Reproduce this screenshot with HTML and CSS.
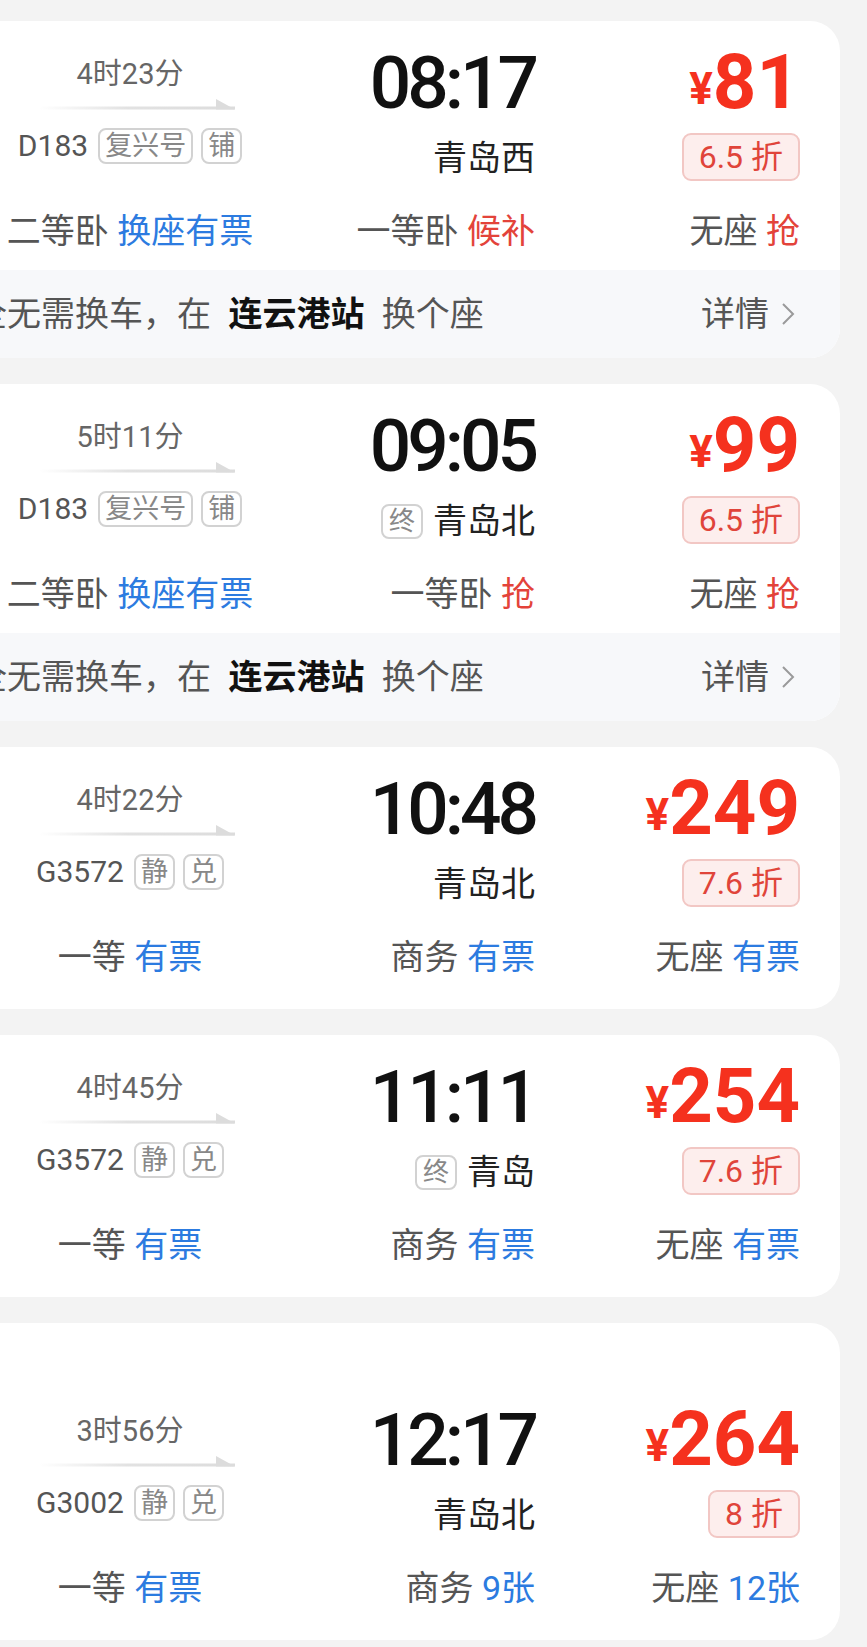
FILE: index.html
```html
<!DOCTYPE html>
<html lang="zh-CN">
<head>
<meta charset="utf-8">
<title>车次列表</title>
<link rel="stylesheet" href="styles.css">
</head>
<body>
<svg width="0" height="0" class="defs">
  <defs>
    <linearGradient id="arrowGrad" x1="0" y1="0" x2="1" y2="0">
      <stop offset="0" stop-color="#e2e2e2" stop-opacity="0"/>
      <stop offset="0.45" stop-color="#e2e2e2" stop-opacity="1"/>
      <stop offset="1" stop-color="#dcdcdc" stop-opacity="1"/>
    </linearGradient>
  </defs>
</svg>
<div class="list">

  <div class="card card--footer">
    <div class="main">
      <div class="col-info">
        <div class="duration">4时23分</div>
        <svg class="arrow" viewBox="0 0 196 12"><rect x="0" y="8.5" width="196" height="3" fill="url(#arrowGrad)"/><polygon points="177,1 196,11.5 177,11.5" fill="#dcdcdc"/></svg>
        <div class="train"><span class="train-no">D183</span><span class="tag">复兴号</span><span class="tag">铺</span></div>
      </div>
      <div class="col-arr">
        <div class="time">08:17</div>
        <div class="station">青岛西</div>
      </div>
      <div class="col-price">
        <div class="price"><span class="yen">¥</span>81</div>
        <div class="discount">6.5 折</div>
      </div>
    </div>
    <div class="seats">
      <div class="seat">二等卧 <span class="blue">换座有票</span></div>
      <div class="seat">一等卧 <span class="red">候补</span></div>
      <div class="seat">无座 <span class="red">抢</span></div>
    </div>
    <div class="footer">
      <div class="note">全无需换车，在 <b>连云港站</b> 换个座</div>
      <div class="detail">详情<svg class="chev" viewBox="0 0 14 24"><polyline points="2,2 12,12 2,22" fill="none" stroke="#9a9a9a" stroke-width="2"/></svg></div>
    </div>
  </div>

  <div class="card card--footer">
    <div class="main">
      <div class="col-info">
        <div class="duration">5时11分</div>
        <svg class="arrow" viewBox="0 0 196 12"><rect x="0" y="8.5" width="196" height="3" fill="url(#arrowGrad)"/><polygon points="177,1 196,11.5 177,11.5" fill="#dcdcdc"/></svg>
        <div class="train"><span class="train-no">D183</span><span class="tag">复兴号</span><span class="tag">铺</span></div>
      </div>
      <div class="col-arr">
        <div class="time">09:05</div>
        <div class="station"><span class="end-tag">终</span>青岛北</div>
      </div>
      <div class="col-price">
        <div class="price"><span class="yen">¥</span>99</div>
        <div class="discount">6.5 折</div>
      </div>
    </div>
    <div class="seats">
      <div class="seat">二等卧 <span class="blue">换座有票</span></div>
      <div class="seat">一等卧 <span class="red">抢</span></div>
      <div class="seat">无座 <span class="red">抢</span></div>
    </div>
    <div class="footer">
      <div class="note">全无需换车，在 <b>连云港站</b> 换个座</div>
      <div class="detail">详情<svg class="chev" viewBox="0 0 14 24"><polyline points="2,2 12,12 2,22" fill="none" stroke="#9a9a9a" stroke-width="2"/></svg></div>
    </div>
  </div>

  <div class="card">
    <div class="main">
      <div class="col-info">
        <div class="duration">4时22分</div>
        <svg class="arrow" viewBox="0 0 196 12"><rect x="0" y="8.5" width="196" height="3" fill="url(#arrowGrad)"/><polygon points="177,1 196,11.5 177,11.5" fill="#dcdcdc"/></svg>
        <div class="train"><span class="train-no">G3572</span><span class="tag">静</span><span class="tag">兑</span></div>
      </div>
      <div class="col-arr">
        <div class="time">10:48</div>
        <div class="station">青岛北</div>
      </div>
      <div class="col-price">
        <div class="price"><span class="yen">¥</span>249</div>
        <div class="discount">7.6 折</div>
      </div>
    </div>
    <div class="seats">
      <div class="seat">一等 <span class="blue">有票</span></div>
      <div class="seat">商务 <span class="blue">有票</span></div>
      <div class="seat">无座 <span class="blue">有票</span></div>
    </div>
  </div>

  <div class="card">
    <div class="main">
      <div class="col-info">
        <div class="duration">4时45分</div>
        <svg class="arrow" viewBox="0 0 196 12"><rect x="0" y="8.5" width="196" height="3" fill="url(#arrowGrad)"/><polygon points="177,1 196,11.5 177,11.5" fill="#dcdcdc"/></svg>
        <div class="train"><span class="train-no">G3572</span><span class="tag">静</span><span class="tag">兑</span></div>
      </div>
      <div class="col-arr">
        <div class="time">11:11</div>
        <div class="station"><span class="end-tag">终</span>青岛</div>
      </div>
      <div class="col-price">
        <div class="price"><span class="yen">¥</span>254</div>
        <div class="discount">7.6 折</div>
      </div>
    </div>
    <div class="seats">
      <div class="seat">一等 <span class="blue">有票</span></div>
      <div class="seat">商务 <span class="blue">有票</span></div>
      <div class="seat">无座 <span class="blue">有票</span></div>
    </div>
  </div>

  <div class="card card--tall">
    <div class="main">
      <div class="col-info">
        <div class="duration">3时56分</div>
        <svg class="arrow" viewBox="0 0 196 12"><rect x="0" y="8.5" width="196" height="3" fill="url(#arrowGrad)"/><polygon points="177,1 196,11.5 177,11.5" fill="#dcdcdc"/></svg>
        <div class="train"><span class="train-no">G3002</span><span class="tag">静</span><span class="tag">兑</span></div>
      </div>
      <div class="col-arr">
        <div class="time">12:17</div>
        <div class="station">青岛北</div>
      </div>
      <div class="col-price">
        <div class="price"><span class="yen">¥</span>264</div>
        <div class="discount">8 折</div>
      </div>
    </div>
    <div class="seats">
      <div class="seat">一等 <span class="blue">有票</span></div>
      <div class="seat">商务 <span class="blue">9张</span></div>
      <div class="seat">无座 <span class="blue">12张</span></div>
    </div>
  </div>

</div>
</body>
</html>
```

FILE: styles.css
```css
html, body {
  margin: 0;
  padding: 0;
}
body {
  background: #f3f3f3;
  overflow: hidden;
  font-family: Roboto, "Noto Sans CJK SC", sans-serif;
  color: #555;
}
.defs {
  position: absolute;
  width: 0;
  height: 0;
}
.list {
  display: flex;
  flex-direction: column;
  gap: 26px;
  padding-top: 21px;
}
.card {
  width: 880px;
  margin-left: -40px;
  background: #fff;
  border-radius: 30px;
  overflow: hidden;
  padding-bottom: 32px;
}
.card--footer {
  padding-bottom: 0;
}
.main {
  display: grid;
  grid-template-columns: 260px 275px 265px;
  height: 134px;
  padding: 26px 40px 0 40px;
  box-sizing: content-box;
  align-items: start;
}
.card--tall .main {
  padding-top: 81px;
}
.col-info {
  display: flex;
  flex-direction: column;
  align-items: center;
  padding-top: 11px;
}
.duration {
  font-size: 29px;
  line-height: 33px;
  color: #666;
}
.arrow {
  display: block;
  width: 196px;
  height: 12px;
  margin-top: 7px;
  margin-left: 14px;
}
.train {
  display: flex;
  align-items: center;
  gap: 8px;
  margin-top: 18px;
  height: 36px;
}
.train-no {
  font-size: 30px;
  line-height: 36px;
  color: #555;
  margin-right: 2px;
}
.tag {
  box-sizing: border-box;
  height: 36px;
  border: 2px solid #d2d2d2;
  border-radius: 8px;
  padding: 0 5px;
  font-size: 27px;
  line-height: 32px;
  color: #888;
}
.col-arr {
  display: flex;
  flex-direction: column;
  align-items: flex-end;
}
.time {
  font-size: 73px;
  line-height: 73px;
  font-weight: 500;
  color: #111;
  letter-spacing: -4px;
}
.station {
  display: flex;
  align-items: center;
  gap: 10px;
  margin-top: 20px;
  height: 36px;
  font-size: 34px;
  line-height: 36px;
  color: #222;
}
.end-tag {
  box-sizing: border-box;
  height: 35px;
  border: 2px solid #d2d2d2;
  border-radius: 8px;
  padding: 0 6px;
  font-size: 26px;
  line-height: 31px;
  color: #888;
}
.col-price {
  display: flex;
  flex-direction: column;
  align-items: flex-end;
}
.price {
  height: 70px;
  font-size: 76px;
  line-height: 70px;
  font-weight: 700;
  color: #f5311e;
  white-space: nowrap;
}
.yen {
  font-size: 44px;
  line-height: 1;
  margin-right: 0;
  vertical-align: 4px;
}
.discount {
  box-sizing: border-box;
  height: 48px;
  margin-top: 16px;
  border: 2px solid #f2c7c4;
  background: #fdeeed;
  border-radius: 9px;
  padding: 0 15px;
  font-size: 32px;
  line-height: 44px;
  color: #e0443a;
  white-space: nowrap;
}
.seats {
  display: grid;
  grid-template-columns: 260px 275px 265px;
  padding: 0 40px;
  margin-top: 30px;
  height: 40px;
  font-size: 34px;
  line-height: 40px;
  color: #555;
}
.seat {
  text-align: right;
  white-space: nowrap;
}
.seat:first-child {
  text-align: center;
}
.blue {
  color: #2c7be0;
}
.red {
  color: #e3433a;
}
.footer {
  margin-top: 19px;
  height: 88px;
  background: #f7f8fa;
  display: flex;
  align-items: center;
  justify-content: space-between;
  padding: 0 45px 0 13px;
  font-size: 34px;
  line-height: 40px;
  color: #555;
  white-space: nowrap;
}
.note {
  word-spacing: 9px;
}
.note b {
  font-weight: 700;
  color: #111;
}
.detail {
  display: flex;
  align-items: center;
  gap: 12px;
  color: #555;
}
.chev {
  display: block;
  width: 14px;
  height: 24px;
}
```
